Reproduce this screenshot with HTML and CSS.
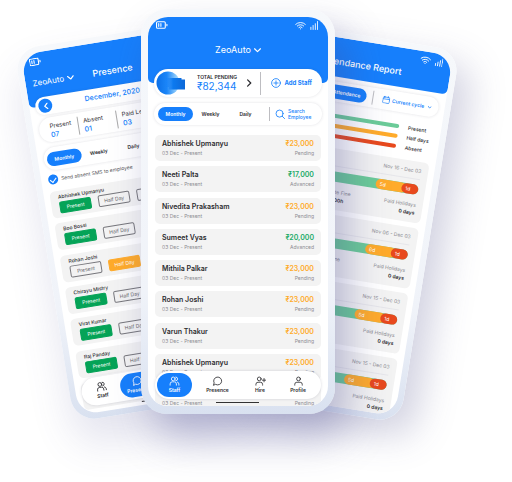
FILE: index.html
```html
<!DOCTYPE html>
<html lang="en">
<head>
<meta charset="utf-8">
<meta name="viewport" content="width=device-width, initial-scale=1">
<title>ZeoAuto</title>
<link rel="stylesheet" href="styles.css">
</head>
<body>
<svg class="sprite" aria-hidden="true">
  <symbol id="battery" viewBox="0 0 22 14"><rect x="1" y="1" width="16" height="12" rx="2"/><path d="M5 4.500v5M9 4.500v5M20 5.500v3"/></symbol>
  <symbol id="wifi" viewBox="0 0 24 18"><path d="M1.500 6.500a15 15 0 0 1 21 0M5 10a10 10 0 0 1 14 0M8.500 13.300a5 5 0 0 1 7 0M12 16.200v.3"/></symbol>
  <symbol id="signal" viewBox="0 0 18 20"><path d="M2 19v-5M7 19v-9M12 19V6M17 19V1"/></symbol>
  <symbol id="down" viewBox="0 0 12 8"><path d="M1 1l5 5 5-5"/></symbol>
  <symbol id="right" viewBox="0 0 8 12"><path d="M1 1l5 5-5 5"/></symbol>
  <symbol id="left" viewBox="0 0 8 12"><path d="M7 1L2 6l5 5"/></symbol>
  <symbol id="plus" viewBox="0 0 24 24"><circle cx="12" cy="12" r="10.500"/><path d="M12 7v10M7 12h10"/></symbol>
  <symbol id="search" viewBox="0 0 24 24"><circle cx="11" cy="11" r="8.500"/><path d="M17.500 17.500L23 23"/></symbol>
  <symbol id="staff" viewBox="0 0 24 24"><circle cx="9" cy="7" r="4.500"/><path d="M1.500 22v-3a5 5 0 0 1 5-5h5a5 5 0 0 1 5 5v3M15 2.500a4.500 4.500 0 0 1 0 9M19 14.500a5 5 0 0 1 3.500 4.500v3"/></symbol>
  <symbol id="chat" viewBox="0 0 24 24"><path d="M2.500 21.500l1.500-5a9.500 9.500 0 1 1 4 4z"/></symbol>
  <symbol id="hire" viewBox="0 0 26 24"><circle cx="10" cy="7" r="4.500"/><path d="M2 22v-2a5 5 0 0 1 5-5h6a5 5 0 0 1 5 5v2M21.500 6v8M17.500 10h8"/></symbol>
  <symbol id="user" viewBox="0 0 24 24"><circle cx="12" cy="7" r="4.500"/><path d="M3 22v-2a5 5 0 0 1 5-5h8a5 5 0 0 1 5 5v2"/></symbol>
  <symbol id="calendar" viewBox="0 0 24 24"><rect x="2" y="4" width="20" height="18" rx="3"/><path d="M2 10h20M7 1v5M17 1v5"/></symbol>
</svg>

<main class="stage">
  <section class="phone side presence">
    <div class="screen">
      <header class="top">
        <div class="status"><svg class="icon battery"><use href="#battery"/></svg></div>
        <div class="title-row">
          <button class="account">ZeoAuto <svg class="icon chevron"><use href="#down"/></svg></button>
          <h2>Presence</h2>
        </div>
      </header>
      <div class="pill month">
        <button class="back" aria-label="Previous month"><svg class="icon"><use href="#left"/></svg></button>
        <span>December, 2020</span>
      </div>
      <dl class="pill stats">
        <div><dt>Present</dt><dd>07</dd></div>
        <div><dt>Absent</dt><dd>01</dd></div>
        <div><dt>Paid Leaves</dt><dd>03</dd></div>
      </dl>
      <nav class="pill tabs">
        <button class="active">Monthly</button><button>Weekly</button><button>Daily</button>
      </nav>
      <label class="sms"><input type="checkbox" checked> Send absent SMS to employee</label>
      <ul class="list">
        <li><h3>Abhishek Upmanyu</h3><div><button class="present">Present</button><button>Half Day</button><button>Absent</button></div></li>
        <li><h3>Boo Bossi</h3><div><button class="present">Present</button><button>Half Day</button><button>Absent</button></div></li>
        <li><h3>Rohan Joshi</h3><div><button>Present</button><button class="half">Half Day</button><button>Absent</button></div></li>
        <li><h3>Chirayu Mistry</h3><div><button class="present">Present</button><button>Half Day</button><button>Absent</button></div></li>
        <li><h3>Virat Kumar</h3><div><button class="present">Present</button><button>Half Day</button><button>Absent</button></div></li>
        <li><h3>Raj Panday</h3><div><button class="present">Present</button><button>Half Day</button><button>Absent</button></div></li>
        <li></li>
      </ul>
      <nav class="dock">
        <a href="#staff"><svg class="icon"><use href="#staff"/></svg>Staff</a>
        <a href="#presence" class="active"><svg class="icon"><use href="#chat"/></svg>Presence</a>
      </nav>
      <span class="home-bar"></span>
    </div>
  </section>

  <section class="phone side report">
    <div class="screen">
      <header class="top">
        <div class="status end"><svg class="icon wifi"><use href="#wifi"/></svg><svg class="icon signal"><use href="#signal"/></svg></div>
        <h2>Attendance Report</h2>
      </header>
      <div class="pill filter">
        <button class="active">Attendance</button>
        <i class="rule"></i>
        <label><svg class="icon calendar"><use href="#calendar"/></svg>
          <select aria-label="Cycle"><option>Current cycle</option></select>
          <svg class="icon caret"><use href="#down"/></svg></label>
      </div>
      <ul class="legend">
        <li>Present</li><li class="amber">Half days</li><li class="red">Absent</li>
      </ul>
      <ul class="cycles">
        <li><p class="dates">Nov 16 - Dec 03</p><div class="bar"><span class="full"></span><span class="half">5d</span><span class="gone">1d</span></div>
          <dl><div><dt>Late Fine</dt><dd>00h</dd></div><div class="paid"><dt>Paid Holidays</dt><dd>0 days</dd></div></dl></li>
        <li><p class="dates">Nov 06 - Dec 03</p><div class="bar"><span class="full"></span><span class="half">6d</span><span class="gone">1d</span></div>
          <dl><div><dt>Late Fine</dt><dd>00h</dd></div><div class="paid"><dt>Paid Holidays</dt><dd>0 days</dd></div></dl></li>
        <li><p class="dates">Nov 15 - Dec 03</p><div class="bar"><span class="full"></span><span class="half">5d</span><span class="gone">1d</span></div>
          <dl><div class="paid"><dt>Paid Holidays</dt><dd>0 days</dd></div></dl></li>
        <li><p class="dates">Nov 15 - Dec 03</p><div class="bar"><span class="full"></span><span class="half">5d</span><span class="gone">1d</span></div>
          <dl><div class="paid"><dt>Paid Holidays</dt><dd>0 days</dd></div></dl></li>
      </ul>
    </div>
  </section>

  <section class="phone main">
    <div class="screen">
      <header class="top">
        <div class="status"><svg class="icon battery"><use href="#battery"/></svg><span></span><svg class="icon wifi"><use href="#wifi"/></svg><svg class="icon signal"><use href="#signal"/></svg></div>
        <button class="account">ZeoAuto <svg class="icon chevron"><use href="#down"/></svg></button>
      </header>
      <div class="pill summary">
        <svg class="wallet" viewBox="0 0 30 24" aria-hidden="true">
          <defs>
            <linearGradient id="disc"><stop offset="0" stop-color="#0b6fe8"/><stop offset=".45" stop-color="#1b86f8"/><stop offset="1" stop-color="#b8e4fc"/></linearGradient>
            <linearGradient id="note"><stop offset="0" stop-color="#167ffc" stop-opacity="0"/><stop offset=".4" stop-color="#0c7af0"/><stop offset="1" stop-color="#0d68d8"/></linearGradient>
          </defs>
          <circle cx="12" cy="12" r="11.500" fill="url(#disc)"/>
          <path d="M9 7h16.500v1.500H29v10H13V16H9z" fill="url(#note)"/>
        </svg>
        <div class="total"><span>TOTAL PENDING</span><strong>₹82,344</strong></div>
        <svg class="icon next"><use href="#right"/></svg>
        <i class="rule"></i>
        <button class="add"><svg class="icon"><use href="#plus"/></svg>Add Staff</button>
      </div>
      <nav class="pill tabs">
        <button class="active">Monthly</button><button>Weekly</button><button>Daily</button>
        <i class="rule"></i>
        <button class="find"><svg class="icon"><use href="#search"/></svg><span>Search<br>Employee</span></button>
      </nav>
      <ul class="list">
        <li><h3>Abhishek Upmanyu</h3><b>₹23,000</b><p>03 Dec - Present</p><p>Pending</p></li>
        <li><h3>Neeti Palta</h3><b class="paid">₹17,000</b><p>03 Dec - Present</p><p>Advanced</p></li>
        <li><h3>Nivedita Prakasham</h3><b>₹23,000</b><p>03 Dec - Present</p><p>Pending</p></li>
        <li><h3>Sumeet Vyas</h3><b class="paid">₹20,000</b><p>03 Dec - Present</p><p>Advanced</p></li>
        <li><h3>Mithila Palkar</h3><b>₹23,000</b><p>03 Dec - Present</p><p>Pending</p></li>
        <li><h3>Rohan Joshi</h3><b>₹23,000</b><p>03 Dec - Present</p><p>Pending</p></li>
        <li><h3>Varun Thakur</h3><b>₹23,000</b><p>03 Dec - Present</p><p>Pending</p></li>
        <li><h3>Abhishek Upmanyu</h3><b>₹23,000</b><p>03 Dec - Present</p><p>Pending</p></li>
        <li class="last"><p>03 Dec - Present</p><p>Pending</p></li>
      </ul>
      <nav class="dock">
        <a href="#staff" class="active"><svg class="icon"><use href="#staff"/></svg>Staff</a>
        <a href="#presence"><svg class="icon"><use href="#chat"/></svg>Presence</a>
        <a href="#hire"><svg class="icon"><use href="#hire"/></svg>Hire</a>
        <a href="#profile"><svg class="icon"><use href="#user"/></svg>Profile</a>
      </nav>
      <span class="home-bar"></span>
    </div>
  </section>
</main>
</body>
</html>
```
FILE: styles.css
```css
:root {
  --blue: #167ffc;
  --amber: #ffab2b;
  --green: #05a357;
  --mint: #6bcb98;
  --red: #e8491d;
  --card: #f3f3f3;
  --ink: #2b2b2f;
  --muted: #8c8c92;
}

* { box-sizing: border-box; }

body {
  margin: 0;
  background: #fff;
  color: var(--ink);
  font-family: Inter, "Open Sans", sans-serif;
  font-size: 6px;
  line-height: 8px;
  overflow: hidden;
}

h2, h3, p, ul, dl, dd { margin: 0; padding: 0; }
ul { list-style: none; }
button, select {
  margin: 0;
  padding: 0;
  border: 0;
  background: none;
  color: inherit;
  font: inherit;
}
a { color: inherit; text-decoration: none; }

.sprite { display: none; }
.icon {
  display: block;
  flex: none;
  width: 10px;
  height: 10px;
  fill: none;
  stroke: currentColor;
  stroke-width: 2;
  stroke-linecap: round;
  stroke-linejoin: round;
}
.battery { width: 12px; height: 8px; }
.wifi { width: 11px; height: 9px; }
.signal { width: 8px; height: 9px; }
.chevron { width: 7px; height: 5px; }

/* Stage: three overlapping devices placed around the centre line */
.stage {
  position: relative;
  min-height: 482px;
}
.phone {
  position: absolute;
  width: 183px;
  height: 377px;
  padding: 6px;
  border-radius: 24px;
  background: linear-gradient(#f6f8fb, #f0f3f9 70%, #d9e1f0);
}
.main {
  left: calc(50% - 115px);
  top: 9px;
  width: 194px;
  height: 405px;
  padding: 8px 7px;
  border-radius: 26px;
  box-shadow: 12px 24px 40px rgba(70, 70, 140, .36);
}
.presence {
  left: calc(50% - 242px);
  top: 50px;
  transform: rotate(-9.2deg);
  transform-origin: 0 0;
  box-shadow: 0 24px 40px rgba(80, 80, 150, .16);
}
.report {
  left: calc(50% + 21px);
  top: 51px;
  transform: rotate(9.2deg);
  transform-origin: 100% 0;
  box-shadow: 16px 14px 36px rgba(80, 80, 140, .26);
}
.screen {
  position: relative;
  display: flex;
  flex-direction: column;
  height: 100%;
  overflow: hidden;
  border-radius: 20px;
  background: #fff;
}

.top {
  flex: none;
  height: 66px;
  border-radius: 0 0 5px 5px;
  background: var(--blue);
  color: #fff;
}
.status {
  display: flex;
  align-items: center;
  gap: 4px;
  height: 16px;
  padding: 0 10px 0 8px;
}
.status span { flex: 1; }
.status.end { justify-content: flex-end; }
.account {
  display: flex;
  align-items: center;
  gap: 3px;
  margin: 0 auto;
  font-size: 9px;
  line-height: 12px;
}
.main .account { margin-top: 11px; }

.pill {
  display: flex;
  flex: none;
  align-items: center;
  margin: 0 6px;
  border-radius: 14px;
  background: #fff;
  box-shadow: 0 0 3px rgba(60, 60, 90, .16);
}
.rule { flex: none; width: 1px; height: 14px; background: #bdbdc1; }
.pill .active { border-radius: 8px; background: var(--blue); color: #fff; }

/* Main device */
.summary { height: 28px; margin-top: -14px; padding: 0 10px 0 2px; }
.wallet { width: 30px; height: 24px; flex: none; }
.total { width: 42px; margin: 0 8px 0 11px; white-space: nowrap; }
.total span { display: block; font-size: 5px; font-weight: 600; line-height: 6px; }
.total strong { display: block; color: var(--blue); font-size: 10px; font-weight: 400; line-height: 13px; }
.next { width: 5px; height: 8px; }
.summary .rule { height: 23px; margin-left: 8px; }
.add { display: flex; align-items: center; gap: 4px; margin-left: auto; color: var(--blue); font-weight: 700; white-space: nowrap; }

.tabs { height: 22px; margin-top: 6px; padding: 0 4px; font-weight: 600; font-size: 5px; }
.tabs button { width: 35px; height: 14px; }
.main .tabs .rule { margin-left: 6px; }
.tabs .find { display: flex; align-items: center; gap: 3px; width: auto; margin-left: 5px; color: var(--blue); font-weight: 500; line-height: 6px; text-align: left; }
.find .icon { width: 10px; height: 10px; }

.list { display: grid; flex: none; align-content: space-between; margin: 10px 7px 0; }
.list li { border-radius: 5px; background: var(--card); }
.main .list { height: 276px; }
.main .list li {
  display: grid;
  grid-template-columns: 1fr auto;
  align-content: center;
  height: 26px;
  padding: 0 7px;
}
.main .list .last { align-content: end; padding-bottom: 4px; }
.main h3 { font-size: 7px; font-weight: 600; line-height: 10px; }
.main b { color: var(--amber); font-size: 7px; font-weight: 600; line-height: 10px; text-align: right; }
.main b.paid { color: #1cab68; }
.main li p { color: var(--muted); font-size: 5px; }
.main li p:last-child { text-align: right; }

.dock {
  position: absolute;
  right: 7px;
  bottom: 7px;
  left: 7px;
  display: grid;
  grid-template-columns: 35px 51px 34px 1fr;
  height: 28px;
  padding: 2px;
  border-radius: 14px;
  background: #fff;
  box-shadow: 0 0 3px rgba(60, 60, 90, .2);
  font-size: 5px;
  font-weight: 600;
}
.dock a { display: flex; flex-direction: column; align-items: center; justify-content: center; border-radius: 12px; }
.dock .icon { width: 11px; height: 10px; }
.dock .active { background: var(--blue); color: #fff; }
.home-bar {
  position: absolute;
  bottom: 3px;
  left: 50%;
  width: 43px;
  height: 1px;
  margin-left: -22px;
  background: #333;
}

/* Presence device */
.presence .top { height: 54px; }
.presence .status { padding-left: 7px; }
.side .status { height: 18px; }
.title-row { display: flex; align-items: center; gap: 19px; height: 24px; padding-left: 7px; }
.presence .account { margin: 0; font-size: 8px; }
.side h2 { font-size: 9px; font-weight: 500; line-height: 12px; }
.month { height: 18px; margin-top: -9px; padding-left: 3px; color: var(--blue); font-size: 7px; font-weight: 500; }
.month span { margin-left: 33px; }
.back { display: grid; place-items: center; width: 14px; height: 14px; border-radius: 50%; background: var(--blue); color: #fff; }
.back .icon { width: 5px; height: 7px; }
.stats { height: 25px; margin-top: 3px; padding-left: 11px; overflow: hidden; }
.stats div { flex: none; width: 39px; padding-left: 5px; border-left: 1px solid #aaa; }
.stats div:first-child { width: 28px; padding-left: 0; border: 0; }
.stats dt { line-height: 9px; white-space: nowrap; }
.stats dd { color: var(--blue); font-size: 7px; font-weight: 500; line-height: 9px; }
.presence .tabs { height: 23px; margin-top: 5px; padding-left: 3px; }
.sms { display: flex; align-items: center; gap: 3px; margin: 4px 0 0 7px; font-size: 5px; line-height: 10px; color: #55555a; }
.sms input { display: grid; place-items: center; width: 10px; height: 10px; margin: 0; border-radius: 50%; background: var(--blue); appearance: none; }
.sms input::before { content: ""; width: 5px; height: 3px; border: solid #fff; border-width: 0 0 1px 1px; transform: rotate(-45deg); }
.presence .list { height: 221px; margin: 7px 6px 0; }
.presence .list li { height: 27px; padding: 2px 8px; }
.presence h3 { font-size: 5px; font-weight: 500; line-height: 9px; }
.presence li div { display: flex; gap: 7px; }
.presence li button { width: 32px; height: 12px; border: 1px solid #77777c; border-radius: 2px; font-size: 5px; line-height: 8px; color: #66666b; }
.presence li .present { border-color: var(--green); background: var(--green); color: #fff; }
.presence li .half { border-color: var(--amber); background: var(--amber); color: #fff; }
.side .dock { right: 6px; left: 6px; grid-template-columns: 37px 35px; }

/* Report device */
.report .top { height: 39px; }
.report h2 { padding-right: 6px; text-align: center; }
.report .status { height: 16px; padding-right: 9px; }
.report h2 { margin-top: 2px; }
.filter { height: 20px; margin-top: 5px; padding: 0 7px 0 26px; font-weight: 600; color: var(--blue); }
.filter .active { width: 60px; height: 14px; padding-right: 6px; font-size: 5px; text-align: right; }
.filter .rule { margin: 0 9px 0 6px; }
.filter label { display: flex; flex: 1; align-items: center; gap: 2px; font-size: 5px; }
.filter select { flex: 1; width: 30px; appearance: none; font-weight: 600; }
.calendar { width: 8px; height: 8px; }
.caret { width: 4px; height: 3px; }
.legend { margin: 9px 6px 0; font-size: 5px; font-weight: 500; }
.legend li { display: flex; align-items: center; gap: 9px; height: 10px; }
.legend li::before { content: ""; width: 123px; height: 4px; border-radius: 2px; background: var(--mint); }
.legend .amber::before { background: var(--amber); }
.legend .red::before { background: var(--red); }
.cycles { display: grid; gap: 5px; margin: 7px 6px 0; }
.cycles li { height: 61px; padding: 5px 7px; border-radius: 5px; background: var(--card); font-size: 5px; }
.dates { height: 13px; border-bottom: 1px solid #e6e6ea; color: var(--muted); text-align: right; }
.bar { display: flex; height: 10px; margin-top: 5px; border-radius: 5px; background: var(--mint); color: #fff; }
.bar span { padding-left: 4px; border-radius: 5px; line-height: 10px; }
.bar .full { flex: 1; }
.bar .half { width: 31px; margin-right: -5px; background: var(--amber); }
.bar .gone { width: 17px; background: var(--red); }
.cycles dl { display: flex; justify-content: flex-end; gap: 34px; margin-top: 6px; text-align: center; }
.cycles dt { color: var(--muted); }
.cycles dd { font-weight: 600; }
.cycles .paid { text-align: right; }
```
